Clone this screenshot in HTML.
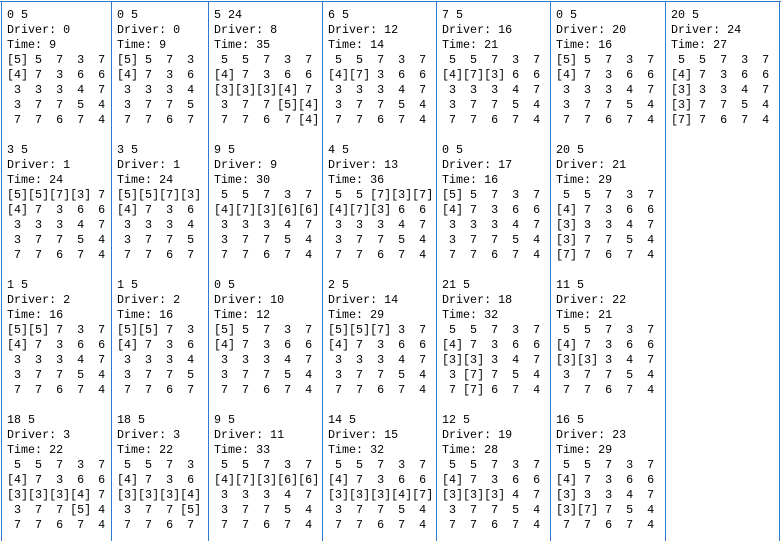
<!DOCTYPE html>
<html><head><meta charset="utf-8"><style>
body{margin:0;width:781px;height:538px;background:#fff;position:relative;overflow:hidden}
.c{position:absolute;top:1px;height:540px;border-left:1px solid #2b7bd0;overflow:hidden;box-sizing:border-box}
.t{position:absolute;left:0;top:0;width:781px;height:1px;background:#2b7bd0}
pre{margin:0;padding:7px 0 0 5px;font:11.7px/15px "Liberation Mono",monospace;color:#000;white-space:pre}
</style></head><body>
<div class="t" style="top:1px"></div>
<div class="c" style="left:1px;width:110px"><pre>0 5
Driver: 0
Time: 9
[5] 5  7  3  7
[4] 7  3  6  6
 3  3  3  4  7
 3  7  7  5  4
 7  7  6  7  4

3 5
Driver: 1
Time: 24
[5][5][7][3] 7
[4] 7  3  6  6
 3  3  3  4  7
 3  7  7  5  4
 7  7  6  7  4

1 5
Driver: 2
Time: 16
[5][5] 7  3  7
[4] 7  3  6  6
 3  3  3  4  7
 3  7  7  5  4
 7  7  6  7  4

18 5
Driver: 3
Time: 22
 5  5  7  3  7
[4] 7  3  6  6
[3][3][3][4] 7
 3  7  7 [5] 4
 7  7  6  7  4</pre></div>
<div class="c" style="left:111px;width:97px"><pre>0 5
Driver: 0
Time: 9
[5] 5  7  3
[4] 7  3  6
 3  3  3  4
 3  7  7  5
 7  7  6  7

3 5
Driver: 1
Time: 24
[5][5][7][3]
[4] 7  3  6
 3  3  3  4
 3  7  7  5
 7  7  6  7

1 5
Driver: 2
Time: 16
[5][5] 7  3
[4] 7  3  6
 3  3  3  4
 3  7  7  5
 7  7  6  7

18 5
Driver: 3
Time: 22
 5  5  7  3
[4] 7  3  6
[3][3][3][4]
 3  7  7 [5]
 7  7  6  7</pre></div>
<div class="c" style="left:208px;width:114px"><pre>5 24
Driver: 8
Time: 35
 5  5  7  3  7
[4] 7  3  6  6
[3][3][3][4] 7
 3  7  7 [5][4]
 7  7  6  7 [4]

9 5
Driver: 9
Time: 30
 5  5  7  3  7
[4][7][3][6][6]
 3  3  3  4  7
 3  7  7  5  4
 7  7  6  7  4

0 5
Driver: 10
Time: 12
[5] 5  7  3  7
[4] 7  3  6  6
 3  3  3  4  7
 3  7  7  5  4
 7  7  6  7  4

9 5
Driver: 11
Time: 33
 5  5  7  3  7
[4][7][3][6][6]
 3  3  3  4  7
 3  7  7  5  4
 7  7  6  7  4</pre></div>
<div class="c" style="left:322px;width:114px"><pre>6 5
Driver: 12
Time: 14
 5  5  7  3  7
[4][7] 3  6  6
 3  3  3  4  7
 3  7  7  5  4
 7  7  6  7  4

4 5
Driver: 13
Time: 36
 5  5 [7][3][7]
[4][7][3] 6  6
 3  3  3  4  7
 3  7  7  5  4
 7  7  6  7  4

2 5
Driver: 14
Time: 29
[5][5][7] 3  7
[4] 7  3  6  6
 3  3  3  4  7
 3  7  7  5  4
 7  7  6  7  4

14 5
Driver: 15
Time: 32
 5  5  7  3  7
[4] 7  3  6  6
[3][3][3][4][7]
 3  7  7  5  4
 7  7  6  7  4</pre></div>
<div class="c" style="left:436px;width:114px"><pre>7 5
Driver: 16
Time: 21
 5  5  7  3  7
[4][7][3] 6  6
 3  3  3  4  7
 3  7  7  5  4
 7  7  6  7  4

0 5
Driver: 17
Time: 16
[5] 5  7  3  7
[4] 7  3  6  6
 3  3  3  4  7
 3  7  7  5  4
 7  7  6  7  4

21 5
Driver: 18
Time: 32
 5  5  7  3  7
[4] 7  3  6  6
[3][3] 3  4  7
 3 [7] 7  5  4
 7 [7] 6  7  4

12 5
Driver: 19
Time: 28
 5  5  7  3  7
[4] 7  3  6  6
[3][3][3] 4  7
 3  7  7  5  4
 7  7  6  7  4</pre></div>
<div class="c" style="left:550px;width:115px"><pre>0 5
Driver: 20
Time: 16
[5] 5  7  3  7
[4] 7  3  6  6
 3  3  3  4  7
 3  7  7  5  4
 7  7  6  7  4

20 5
Driver: 21
Time: 29
 5  5  7  3  7
[4] 7  3  6  6
[3] 3  3  4  7
[3] 7  7  5  4
[7] 7  6  7  4

11 5
Driver: 22
Time: 21
 5  5  7  3  7
[4] 7  3  6  6
[3][3] 3  4  7
 3  7  7  5  4
 7  7  6  7  4

16 5
Driver: 23
Time: 29
 5  5  7  3  7
[4] 7  3  6  6
[3] 3  3  4  7
[3][7] 7  5  4
 7  7  6  7  4</pre></div>
<div class="c" style="left:665px;width:115px;border-right:1px solid #2b7bd0"><pre>20 5
Driver: 24
Time: 27
 5  5  7  3  7
[4] 7  3  6  6
[3] 3  3  4  7
[3] 7  7  5  4
[7] 7  6  7  4</pre></div>
</body></html>
